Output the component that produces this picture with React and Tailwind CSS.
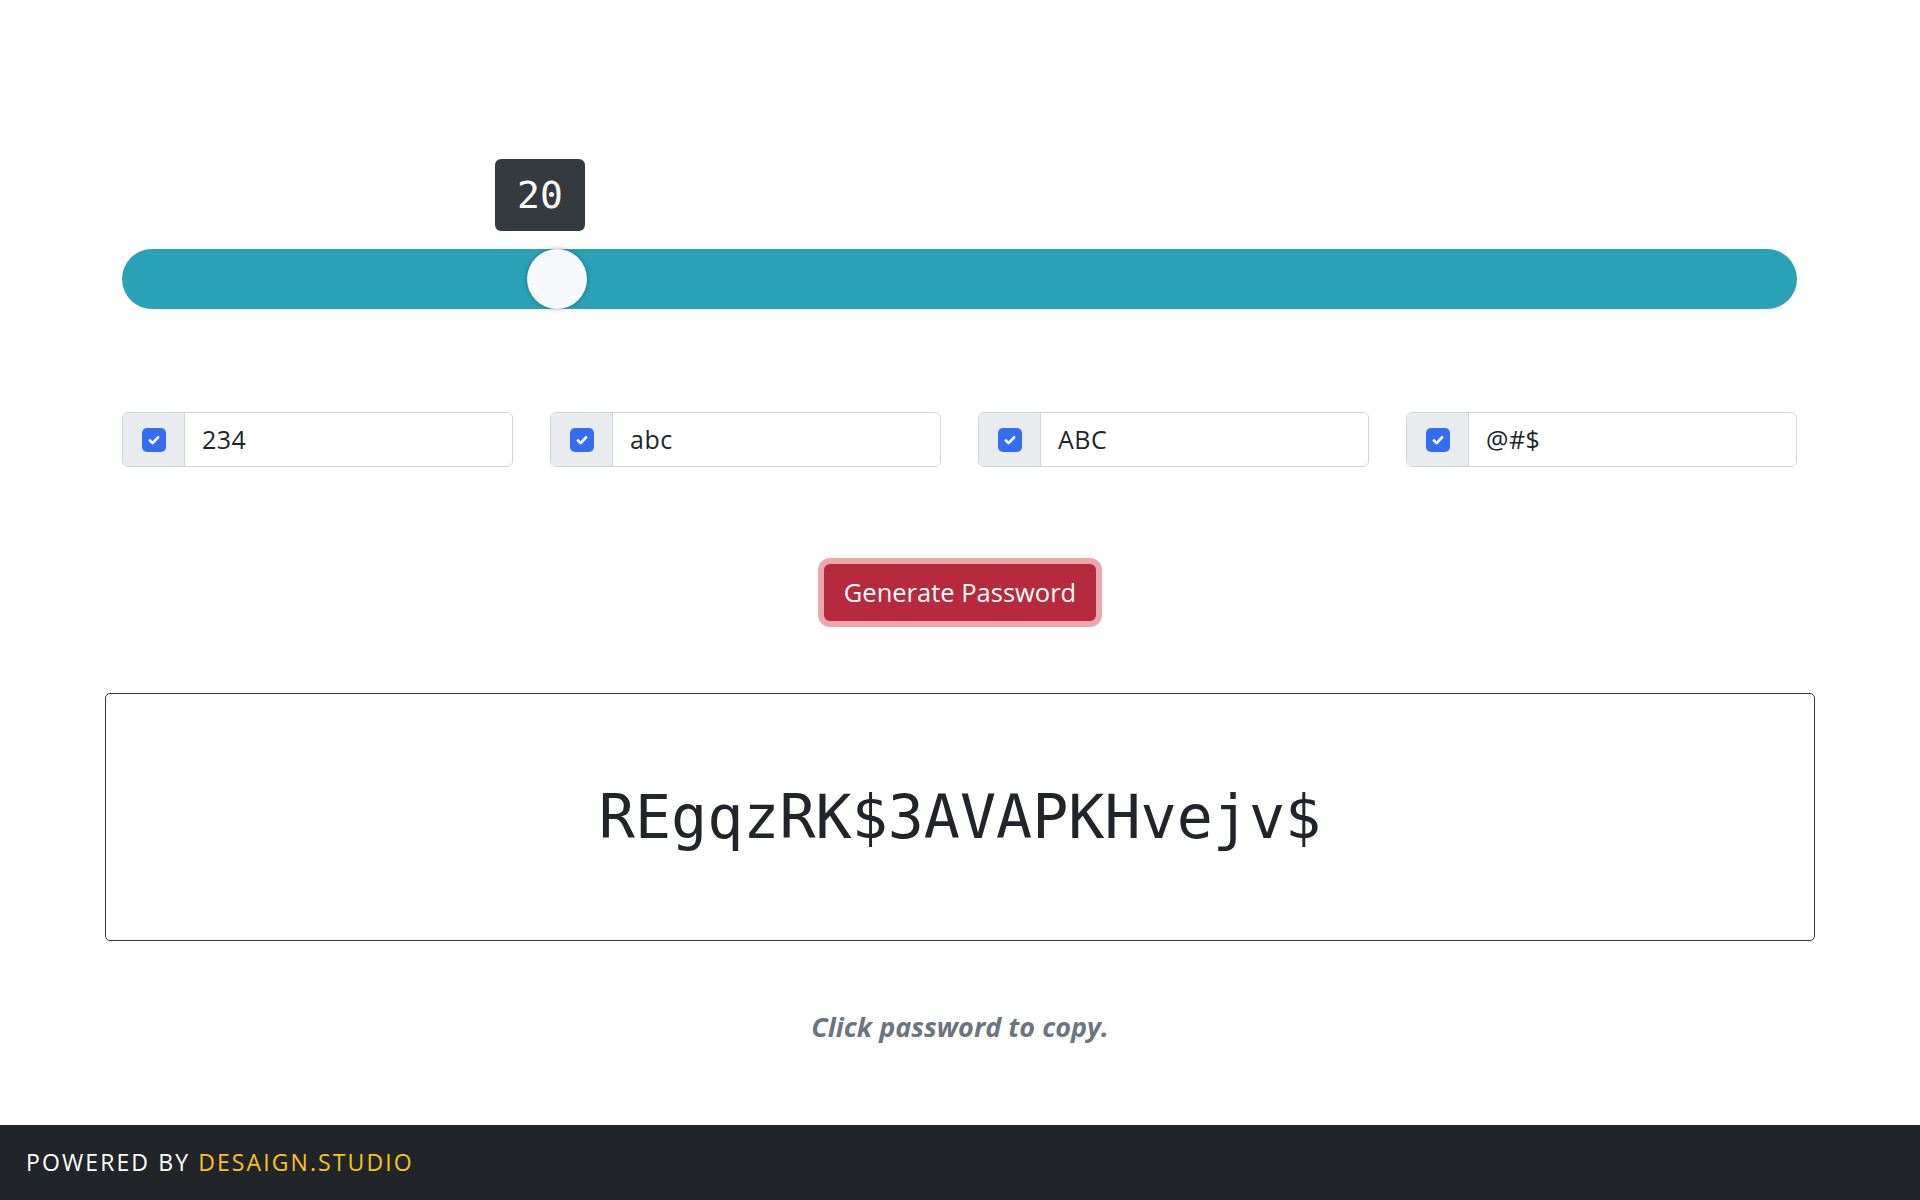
import React from "react";

function Check() {
  return (
    <span className="flex h-[24px] w-[24px] items-center justify-center rounded-[5px] bg-[#346cf2]">
      <svg width="18" height="18" viewBox="0 0 20 20" fill="none">
        <path d="M5.5 10.5l3 3L14.5 7" stroke="#fff" strokeWidth="3" strokeLinecap="round" strokeLinejoin="round" />
      </svg>
    </span>
  );
}

function Group({ label }) {
  return (
    <div className="flex h-[55px] rounded-[6px] border border-[#ced4da] overflow-hidden">
      <div className="flex w-[62px] items-center justify-center bg-[#e9ecef] border-r border-[#ced4da]">
        <Check />
      </div>
      <div className="flex flex-1 items-center bg-white pl-[17px] text-[25px] tracking-[0.5px] text-[#212529]">{label}</div>
    </div>
  );
}

export default function App() {
  const sans = "font-['Open_Sans',sans-serif]";
  return (
    <div className={`flex min-h-screen flex-col bg-white ${sans}`}>
      <main className="flex-1">
        <section className="pl-[122px] pr-[123px] pt-[159px]">
          <div className="ml-[373px] flex h-[72px] w-[90px] items-center justify-center rounded-[6px] bg-[#343a40] font-['DejaVu_Sans_Mono',monospace] text-[38px] text-white">
            20
          </div>
          <div className="relative mt-[18px] h-[60px] rounded-full bg-[#29a2b7]">
            <div className="absolute left-[405px] top-0 h-[60px] w-[60px] rounded-full bg-[#f8f9fa] shadow-[0_0_4px_rgba(0,0,0,0.35)]" />
          </div>
        </section>

        <section className="mt-[103px] grid grid-cols-4 gap-[37px] pl-[122px] pr-[123px]">
          <Group label="234" />
          <Group label="abc" />
          <Group label="ABC" />
          <Group label="@#$" />
        </section>

        <div className="mt-[97px] flex justify-center">
          <button className="h-[57px] w-[272px] rounded-[6px] bg-[#b7293c] text-[25.5px] text-white ring-[6px] ring-[#eea6ad]">
            Generate Password
          </button>
        </div>

        <div className="mx-[105px] mt-[72px] flex h-[248px] items-center justify-center rounded-[5px] border border-[#343a40]">
          <span className="font-['DejaVu_Sans_Mono',monospace] text-[60px] leading-none text-[#212529]">REgqzRK$3AVAPKHvejv$</span>
        </div>

        <p className="mt-[68px] text-center text-[27px] leading-[36px] font-bold italic text-[#6c757d]">
          Click password to copy.
        </p>
      </main>
      <footer className="flex h-[75px] items-center bg-[#212529] pl-[26px] text-[23px] tracking-[2.1px] uppercase">
        <span className="text-white">Powered by&nbsp;</span>
        <span className="text-[#f9c21e]">desaign.studio</span>
      </footer>
    </div>
  );
}
